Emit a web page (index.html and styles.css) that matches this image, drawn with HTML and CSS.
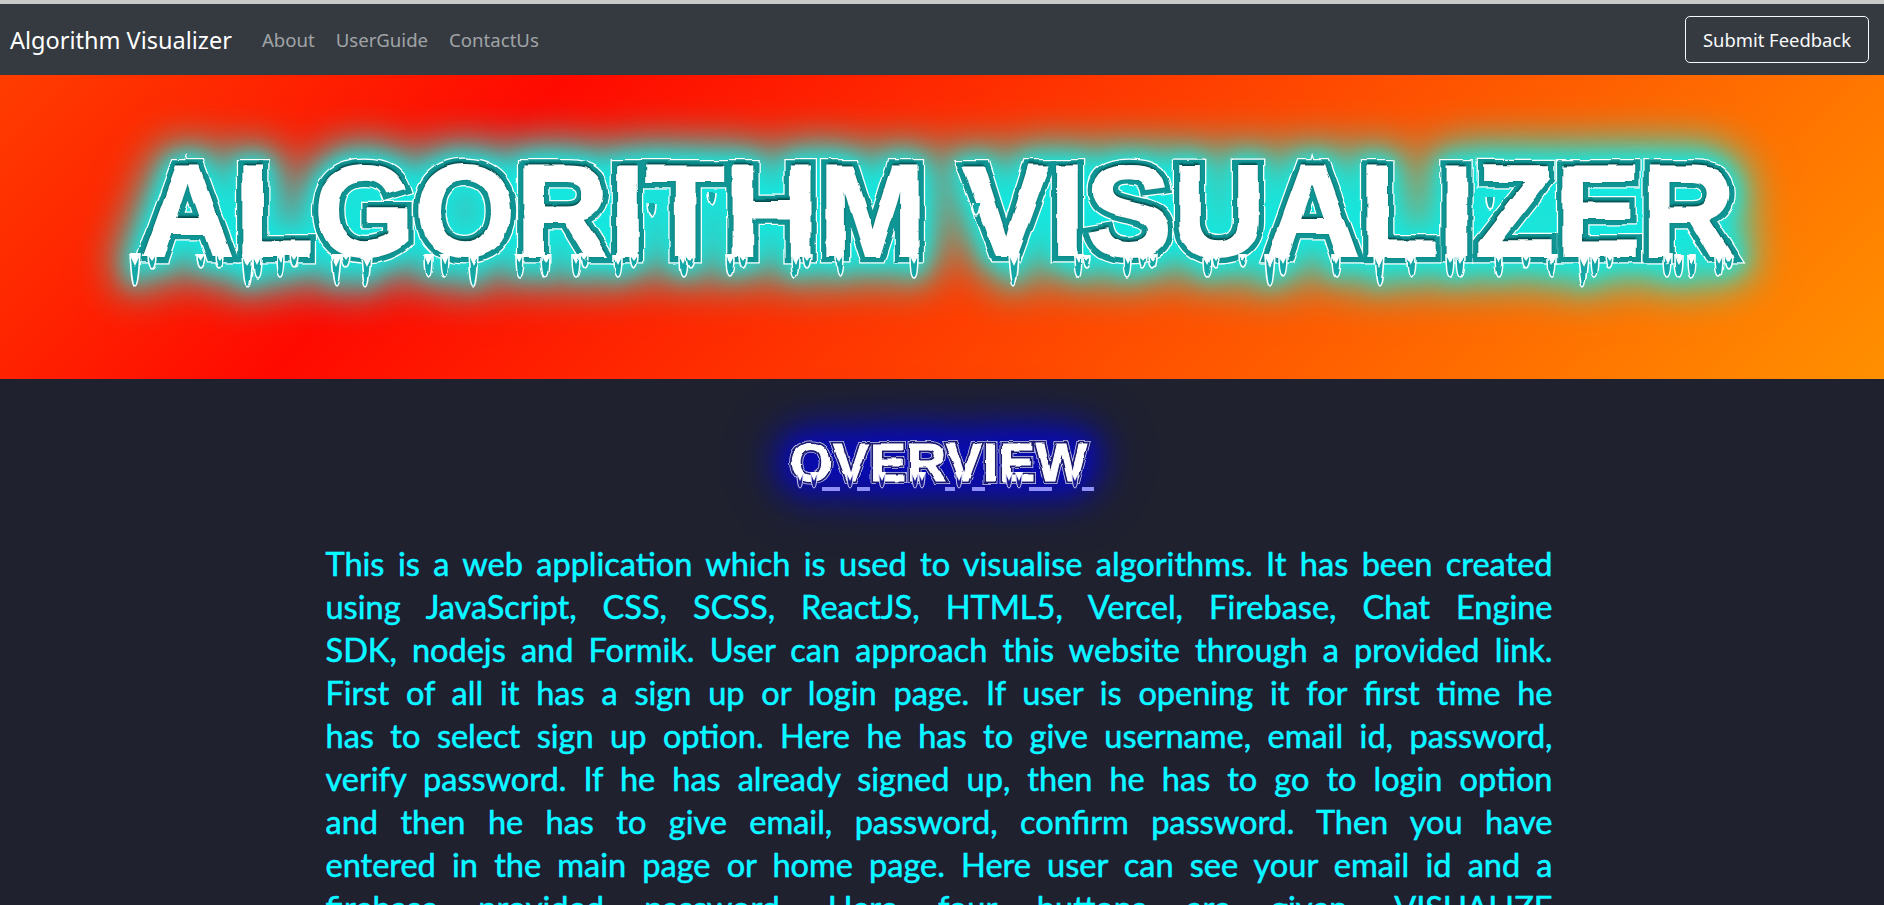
FILE: index.html
```html
<!DOCTYPE html>
<html>
<head>
    <title>Algorithm Visualizer</title>
    <link rel="stylesheet" href="styles.css">
</head>
<body>
    <svg class="defs" width="0" height="0">
        <filter id="rough" x="0" y="0" width="100%" height="100%" color-interpolation-filters="sRGB">
            <feTurbulence type="fractalNoise" baseFrequency="0.04" numOctaves="2" seed="7" result="noise"/>
            <feDisplacementMap in="SourceGraphic" in2="noise" scale="5" xChannelSelector="R" yChannelSelector="G"/>
        </filter>
        <filter id="rough-small" x="-10%" y="-20%" width="120%" height="140%" color-interpolation-filters="sRGB">
            <feTurbulence type="fractalNoise" baseFrequency="0.09" numOctaves="2" seed="3" result="noise"/>
            <feDisplacementMap in="SourceGraphic" in2="noise" scale="3" xChannelSelector="R" yChannelSelector="G"/>
        </filter>
        <!-- drips: short, medium, long, arm (hangs off a letter's arm, no icicle) -->
        <g id="ds"><path class="drip" d="M-4 255C-4 263-2 268 0 268S4 263 4 255"/><path class="icicle" d="M-5 254L0 261L5 254Z"/></g>
        <g id="dm"><path class="drip" d="M-4 255C-4 268-3 277 0 277S4 268 4 255"/><path class="icicle" d="M-5 254L0 264L5 254Z"/></g>
        <g id="dl"><path class="drip" d="M-5 255C-4 270-3 286 0 286S4 270 5 255"/><path class="icicle" d="M-6 254L0 267L6 254Z"/></g>
        <g id="da"><path class="drip" d="M-4 255C-4 263-2 268 0 268S4 263 4 255"/></g>
        <g id="dt"><path class="drip-small" d="M-3 476C-3 484-2 491 0 491S3 484 3 476"/><path class="icicle" d="M-4 475L0 484L4 475Z"/></g>
    </svg>

    <nav class="navbar">
        <a class="brand" href="#">Algorithm Visualizer</a>
        <ul class="nav-links">
            <li><a href="#">About</a></li>
            <li><a href="#">UserGuide</a></li>
            <li><a href="#">ContactUs</a></li>
        </ul>
        <button class="feedback-btn">Submit Feedback</button>
    </nav>

    <header class="hero">
        <div class="hero-art">
            <h1 class="hero-title" data-text="ALGORITHM VISUALIZER">ALGORITHM VISUALIZER</h1>
            <svg class="drips" viewBox="0 75 1884 304">
                <use href="#dl" x="136"/><use href="#ds" x="152"/><use href="#ds" x="201"/><use href="#ds" x="219"/>
                <use href="#dl" x="248"/><use href="#dm" x="257"/><use href="#dm" x="281"/><use href="#ds" x="295"/>
                <use href="#dl" x="337"/><use href="#ds" x="346"/><use href="#dl" x="366"/>
                <use href="#dm" x="429"/><use href="#dm" x="444"/><use href="#dl" x="473"/>
                <use href="#dm" x="520"/><use href="#dm" x="545"/><use href="#dm" x="576"/><use href="#ds" x="585"/>
                <use href="#dm" x="618"/><use href="#ds" x="634"/>
                <use href="#da" x="652" y="-52"/><use href="#dm" x="683"/><use href="#ds" x="690"/><use href="#da" x="712" y="-63"/>
                <use href="#dm" x="730"/><use href="#ds" x="743"/><use href="#dm" x="795"/><use href="#ds" x="807"/>
                <use href="#dm" x="840"/><use href="#dm" x="915"/>
                <use href="#da" x="977" y="-52"/><use href="#dl" x="1013"/>
                <use href="#dm" x="1078"/><use href="#ds" x="1087"/>
                <use href="#dm" x="1127"/><use href="#ds" x="1142"/><use href="#ds" x="1152"/>
                <use href="#dm" x="1207"/><use href="#ds" x="1215"/><use href="#ds" x="1243"/>
                <use href="#dl" x="1270"/><use href="#dm" x="1283"/><use href="#dm" x="1337"/>
                <use href="#dl" x="1380"/><use href="#dm" x="1412"/>
                <use href="#dm" x="1450"/><use href="#dm" x="1460"/>
                <use href="#da" x="1490" y="-58"/><use href="#dm" x="1499"/><use href="#ds" x="1525"/><use href="#dm" x="1552"/>
                <use href="#dl" x="1583"/><use href="#dm" x="1594"/><use href="#ds" x="1609"/>
                <use href="#dm" x="1667"/><use href="#dm" x="1678"/><use href="#dm" x="1691"/><use href="#dm" x="1719"/><use href="#ds" x="1728"/>
            </svg>
        </div>
    </header>

    <main class="content">
        <h2 class="overview">
            <span class="overview-title" data-text="OVERVIEW">OVERVIEW</span>
            <svg class="drips-small" viewBox="788 440 304 55">
                <use href="#dt" x="798"/><use href="#dt" x="812"/><use href="#dt" x="848"/><use href="#dt" x="880"/><use href="#dt" x="913"/>
                <use href="#dt" x="920"/><use href="#dt" x="957"/><use href="#dt" x="1007"/><use href="#dt" x="1017"/><use href="#dt" x="1073"/>
            </svg>
        </h2>
        <p class="overview-text">This is a web application which is used to visualise algorithms. It has been created<br>
        using JavaScript, CSS, SCSS, ReactJS, HTML5, Vercel, Firebase, Chat Engine<br>
        SDK, nodejs and Formik. User can approach this website through a provided link.<br>
        First of all it has a sign up or login page. If user is opening it for first time he<br>
        has to select sign up option. Here he has to give username, email id, password,<br>
        verify password. If he has already signed up, then he has to go to login option<br>
        and then he has to give email, password, confirm password. Then you have<br>
        entered in the main page or home page. Here user can see your email id and a<br>
        firebase provided password. Here four buttons are given. VISUALIZE</p>
    </main>
</body>
</html>
```

FILE: styles.css
```css
html, body {
    height: 100%;
    margin: 0;
    overflow: hidden;
}

body {
    box-sizing: border-box;
    border-top: 4px solid #c9c9c9;
    background: #1f212f;
    font-family: "Noto Sans", sans-serif;
}

.defs {
    display: block;
    height: 0;
}

.drip {
    fill: #14a8a6;
    stroke: #fff;
    stroke-width: 1.6;
}

.drip-small {
    fill: #1a1a90;
    stroke: #d8d8f5;
    stroke-width: 1;
}

.icicle {
    fill: #fff;
}

.navbar {
    display: flex;
    align-items: center;
    height: 71px;
    padding: 0 15px 0 10px;
    background: #343a40;
}

.brand {
    color: #fff;
    font-size: 23.5px;
    text-decoration: none;
}

.nav-links {
    display: flex;
    flex: 1;
    gap: 21px;
    margin: 0 0 0 30px;
    padding: 0;
    list-style: none;
}

.nav-links a {
    color: rgba(255,255,255,.55);
    font-size: 18.6px;
    text-decoration: none;
}

.feedback-btn {
    width: 184px;
    height: 47px;
    padding: 0;
    border: 1px solid #f8f9fa;
    border-radius: 5px;
    background: transparent;
    color: #f8f9fa;
    font-family: "Noto Sans", sans-serif;
    font-size: 18.4px;
}

.hero {
    height: 304px;
    background: linear-gradient(135deg, #ff3d00 0%, #ff0a00 26%, #ff9000 100%);
}

.hero-art {
    position: relative;
    display: flex;
    align-items: center;
    justify-content: center;
    height: 100%;
    padding: 0 8px 32px 0;
    box-sizing: border-box;
    filter: url(#rough) drop-shadow(0 0 10px #14e8e0) drop-shadow(0 0 22px #14e8e0) drop-shadow(0 0 16px rgba(20,232,224,.7));
}

.drips {
    position: absolute;
    top: 0;
    left: 0;
    width: 1884px;
    height: 304px;
}

.hero-title {
    position: relative;
    isolation: isolate;
    margin: 0;
    color: #fff;
    font-family: "Liberation Sans", sans-serif;
    font-size: 129px;
    font-weight: 700;
    line-height: 1;
    letter-spacing: .5px;
    white-space: nowrap;
    text-shadow: 0 0 3px #064f50, 0 -3px 2px #064f50;
    -webkit-text-stroke: 2px #fff;
}

.hero-title::before, .hero-title::after {
    content: attr(data-text);
    position: absolute;
    top: 0;
    left: 0;
    text-shadow: none;
}

.hero-title::before {
    z-index: -2;
    -webkit-text-stroke: 15px #fff;
}

.hero-title::after {
    z-index: -1;
    color: #0f9694;
    -webkit-text-stroke: 12.5px #0f9694;
}

.content {
    display: flex;
    flex-direction: column;
    align-items: center;
}

.overview {
    position: relative;
    width: 304px;
    height: 58px;
    margin: 58px 0 0;
}

/* the dashes only show between the letters */
.overview::after {
    content: "";
    position: absolute;
    bottom: 4px;
    left: 0;
    width: 100%;
    height: 4px;
    background: linear-gradient(90deg,
        transparent 32px, #8f8ff5 32px 50px, transparent 50px 67px, #8f8ff5 67px 80px,
        transparent 80px 155px, #8f8ff5 155px 165px, transparent 165px 182px, #8f8ff5 182px 195px,
        transparent 195px 239px, #8f8ff5 239px 262px, transparent 262px 292px, #8f8ff5 292px 304px);
}

.drips-small {
    position: absolute;
    top: 0;
    left: 0;
    width: 304px;
    height: 55px;
}

.overview-title {
    position: relative;
    display: block;
    isolation: isolate;
    color: #fff;
    font-family: "Liberation Sans", sans-serif;
    font-size: 54px;
    font-weight: 700;
    line-height: 50px;
    letter-spacing: 1px;
    white-space: nowrap;
    -webkit-text-stroke: 1px #fff;
    filter: url(#rough-small) drop-shadow(0 0 10px #0a0cb0) drop-shadow(0 0 18px #0a0cb0) drop-shadow(0 0 20px #0a0cb0);
}

.overview-title::before, .overview-title::after {
    content: attr(data-text);
    position: absolute;
    top: 0;
    left: 0;
}

.overview-title::before {
    z-index: -2;
    -webkit-text-stroke: 6px #c9c9ee;
}

.overview-title::after {
    z-index: -1;
    color: #1a1a70;
    -webkit-text-stroke: 4.5px #1a1a70;
}

.overview-text {
    width: 1227px;
    margin: 47px 6px 0 0;
    color: #00ffff;
    font-family: Lato, sans-serif;
    font-size: 32.5px;
    line-height: 43px;
    text-align: justify;
    text-align-last: justify;
    -webkit-text-stroke: .4px #00ffff;
    text-shadow: 0 0 1px #7a2cff;
}
```
